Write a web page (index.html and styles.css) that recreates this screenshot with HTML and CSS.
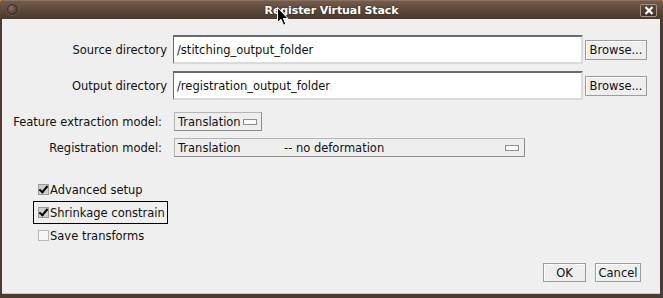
FILE: index.html
```html
<!DOCTYPE html>
<html>
<head>
  <title>Register Virtual Stack</title>
  <meta charset="UTF-8" />
  <link rel="stylesheet" href="styles.css">
</head>
<body>
  <div class="window">
    <div class="titlebar">
      <span class="win-menu"></span>
      <span class="title">Register Virtual Stack</span>
      <span class="win-close">
        <svg width="10" height="9" viewBox="0 0 10 9"><path d="M1.5 1 L8.5 8 M8.5 1 L1.5 8" stroke="#fff" stroke-width="2.2" fill="none"/></svg>
      </span>
      <!-- mouse pointer sitting over the title -->
      <svg class="cursor" width="12" height="19" viewBox="0 0 12 19">
        <path d="M0.5 0.5 L0.5 15.5 L4 12.3 L6.6 18.2 L8.9 17.2 L6.4 11.5 L11 11.5 Z" fill="#000" stroke="#fff" stroke-width="1"/>
      </svg>
    </div>

    <div class="content">
      <div class="path-row">
        <label class="path-label">Source directory</label>
        <div class="text-field">/stitching_output_folder</div>
        <button class="btn browse">Browse...</button>
      </div>
      <div class="path-row">
        <label class="path-label">Output directory</label>
        <div class="text-field">/registration_output_folder</div>
        <button class="btn browse">Browse...</button>
      </div>

      <div class="model-row first">
        <label class="model-label">Feature extraction model:</label>
        <div class="combo small">
          <span>Translation</span>
          <span class="combo-icon"></span>
        </div>
      </div>
      <div class="model-row">
        <label class="model-label">Registration model:</label>
        <div class="combo wide">
          <span class="combo-name">Translation</span>
          <span class="combo-desc">-- no deformation</span>
          <span class="combo-icon"></span>
        </div>
      </div>

      <div class="checks">
        <div class="check"><span class="box on"></span>Advanced setup</div>
        <div class="check focused"><span class="box on"></span>Shrinkage constrain</div>
        <div class="check"><span class="box"></span>Save transforms</div>
      </div>

      <div class="actions">
        <button class="btn ok">OK</button>
        <button class="btn cancel">Cancel</button>
      </div>
    </div>
  </div>
</body>
</html>
```

FILE: styles.css
```css
:root {
  --frame: #4c3b30;
  --panel: #efefef;
  --field-dark: #6a6a6a;
  --field-light: #dadada;
  --btn-border: #9c9c9c;
}

body {
  margin: 0;
  padding: 0;
  background-color: #d4862c;
  font-family: "DejaVu Sans", sans-serif;
  font-size: 11.5px;
  color: #111;
}

.window {
  width: 663px;
  height: 298px;
  box-sizing: border-box;
  display: flex;
  flex-direction: column;
  border-radius: 4px 4px 0 0;
  overflow: hidden;
  background-color: var(--frame);
}

/* Title bar */
.titlebar {
  position: relative;
  height: 19px;
  flex: none;
  display: flex;
  align-items: center;
  justify-content: center;
  background: linear-gradient(#735c4c, #5a4739 55%, #4a392e);
  border-top: 1px solid #8a705e;
  box-sizing: border-box;
}

.title {
  font-family: "DejaVu Sans", sans-serif;
  font-weight: bold;
  font-size: 11px;
  color: #fff;
  text-shadow: 0 0 2px #2a1f18;
  letter-spacing: -0.1px;
}

.win-menu {
  position: absolute;
  left: 7px;
  top: 3px;
  width: 9px;
  height: 9px;
  border-radius: 50%;
  border: 1px solid #3a2c23;
  background: radial-gradient(circle at 35% 35%, #8a7363, #4d3c31 70%);
  box-shadow: 0 0 0 1px #6c5647;
}

.win-close {
  position: absolute;
  right: 6px;
  top: 3px;
  width: 15px;
  height: 11px;
  border: 1px solid #a89484;
  border-radius: 2px;
  background: linear-gradient(#5e4a3d, #3f3027);
  display: flex;
  align-items: center;
  justify-content: center;
}

.cursor {
  position: absolute;
  left: 277px;
  top: 6px;
}

/* Main panel */
.content {
  flex: 1;
  margin: 0 3px 4px 2px;
  background-color: var(--panel);
  border-bottom: 1px solid #cfc8c0;
  display: flex;
  flex-direction: column;
  padding-top: 16px;
}

.path-row {
  display: flex;
  align-items: center;
  height: 29px;
  margin-bottom: 7px;
}

.path-label {
  width: 171px;
  text-align: right;
  padding-right: 6px;
  box-sizing: border-box;
}

.text-field {
  width: 410px;
  height: 29px;
  box-sizing: border-box;
  background-color: #fff;
  border-top: 2px solid var(--field-dark);
  border-left: 1px solid var(--field-dark);
  border-right: 2px solid var(--field-light);
  border-bottom: 2px solid var(--field-light);
  padding: 0 3px;
  display: flex;
  align-items: center;
}

.btn {
  font-family: "DejaVu Sans", sans-serif;
  font-size: 11.5px;
  color: #111;
  background-color: #eeeeee;
  border: 1px solid var(--btn-border);
  box-shadow: inset 1px 1px 0 #fff;
  padding: 0;
  height: 20px;
  box-sizing: border-box;
}

.browse {
  width: 62px;
  margin-left: 2px;
}

.model-row {
  display: flex;
  align-items: center;
  height: 19px;
  margin-bottom: 7px;
}

.model-row.first {
  margin-top: 5px;
}

.model-label {
  width: 160px;
  text-align: right;
  padding-right: 12px;
}

.combo {
  height: 19px;
  box-sizing: border-box;
  border: 1px solid #b4b4b4;
  border-right-color: #8c8c8c;
  border-bottom-color: #8c8c8c;
  background-color: #eeeeee;
  display: flex;
  align-items: center;
  padding: 0 4px 0 3px;
}

.combo.small {
  width: 88px;
}

.combo.wide {
  width: 351px;
}

.combo-name {
  width: 106px;
}

.combo-desc {
  flex: 1;
}

.combo-icon {
  width: 12px;
  height: 4px;
  border: 1px solid #8e8e8e;
  background-color: #fafafa;
  margin-left: auto;
}

.combo.wide .combo-icon {
  margin-right: 1px;
}

/* Checkboxes */
.checks {
  display: flex;
  flex-direction: column;
  margin-top: 14px;
  padding-left: 31px;
  align-items: flex-start;
}

.check {
  display: flex;
  align-items: center;
  height: 23px;
  padding: 0 4px;
  box-sizing: border-box;
  border: 1px solid transparent;
}

.check.focused {
  border-color: #000;
  padding-right: 2px;
}

.box {
  width: 11px;
  height: 11px;
  box-sizing: border-box;
  border: 1px solid #b8b8b8;
  background-color: #f6f6f6;
  margin-right: 1px;
  position: relative;
}

.box.on {
  border-color: #9a9a9a;
  background-color: #cfcfcf;
}

.box.on::after {
  content: "";
  position: absolute;
  left: 2px;
  top: -1px;
  width: 3px;
  height: 7px;
  border-right: 2px solid #000;
  border-bottom: 2px solid #000;
  transform: rotate(40deg);
}

/* Dialog buttons */
.actions {
  display: flex;
  justify-content: flex-end;
  gap: 9px;
  margin-top: auto;
  margin-bottom: 11px;
  margin-right: 19px;
}

.ok {
  width: 43px;
  height: 19px;
}

.cancel {
  width: 46px;
  height: 19px;
}
```
